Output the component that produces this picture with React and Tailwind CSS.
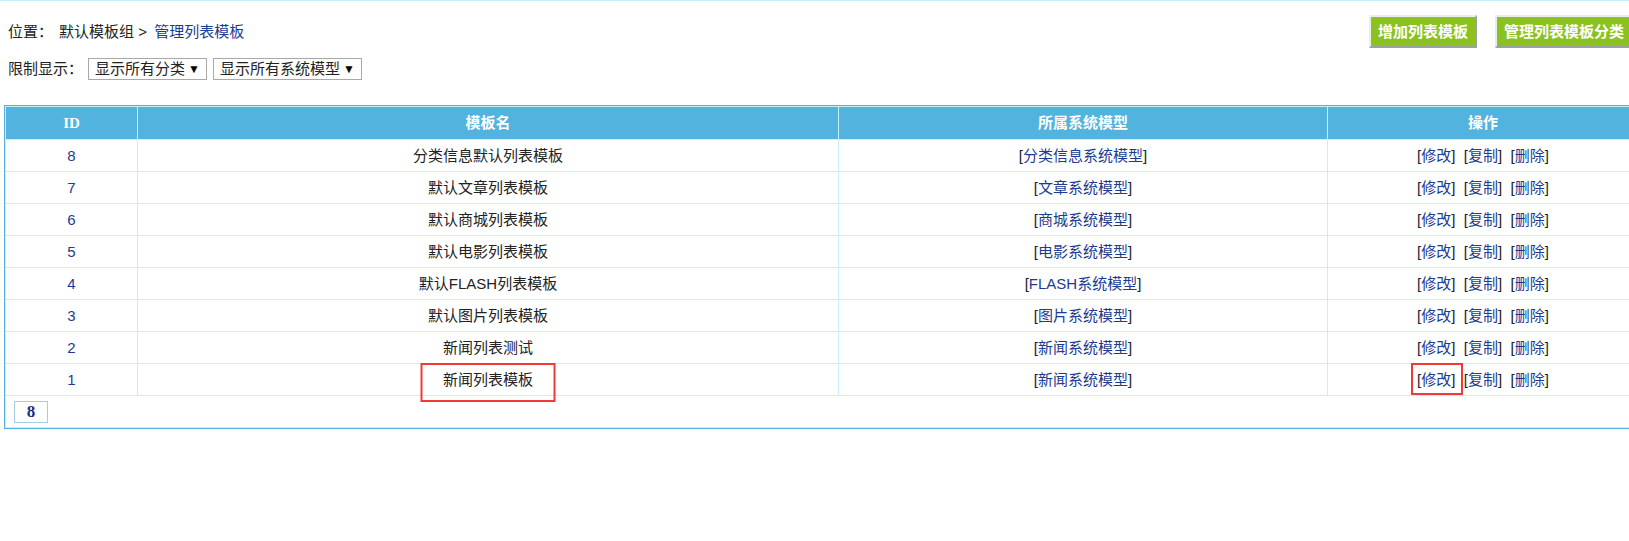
const rows = [
  { id: 8, name: '分类信息默认列表模板', model: '分类信息系统模型' },
  { id: 7, name: '默认文章列表模板', model: '文章系统模型' },
  { id: 6, name: '默认商城列表模板', model: '商城系统模型' },
  { id: 5, name: '默认电影列表模板', model: '电影系统模型' },
  { id: 4, name: '默认FLASH列表模板', model: 'FLASH系统模型' },
  { id: 3, name: '默认图片列表模板', model: '图片系统模型' },
  { id: 2, name: '新闻列表测试', model: '新闻系统模型' },
  { id: 1, name: '新闻列表模板', model: '新闻系统模型', marked: true },
];

const font = { fontFamily: '"Liberation Sans", "Noto Sans CJK SC", sans-serif' };

const Bracket = ({ children, boxed }) => (
  <span className="relative text-[#222]">
    [<span className="text-[#1b3c92]">{children}</span>]
    {boxed && (
      <span className="absolute -left-[6px] -right-[8px] top-1/2 -translate-y-1/2 h-[32px] border-2 border-[#f03a3a]" />
    )}
  </span>
);

const GreenButton = ({ children }) => (
  <button className="h-[33px] px-[7px] bg-[#8cc21f] text-white font-bold text-[15px] leading-[29px] border-2 border-t-[#ececec] border-l-[#ececec] border-b-[#a0a0a0] border-r-[#a0a0a0]">
    {children}
  </button>
);

const FakeSelect = ({ label, width }) => (
  <div className={`flex items-center justify-between h-[22px] px-[6px] border border-[#a9a9a9] bg-white text-[15px] text-[#222] ${width}`}>
    <span className="leading-[20px]">{label}</span>
    <span className="text-[12px] text-black">▼</span>
  </div>
);

export default function App() {
  return (
    <div className="w-[1629px] h-[541px] overflow-hidden bg-white" style={font}>
      <div className="w-[1640px] border-t border-[#c6eef9]">
        {/* Header */}
        <div className="flex justify-between pl-[8px] pr-[7px]">
          <div className="pt-[21px]">
            <div className="flex text-[15px] leading-[20px] text-[#222] whitespace-pre">
              <span>位置：</span>
              <span className="ml-[6px]">默认模板组 &gt; </span>
              <span className="ml-[3px] text-[#1b3c92]">管理列表模板</span>
            </div>
            <div className="flex items-center mt-[16px]">
              <span className="text-[15px] leading-[20px] text-[#222] w-[80px]">限制显示：</span>
              <FakeSelect label="显示所有分类" width="w-[119px]" />
              <div className="w-[6px]" />
              <FakeSelect label="显示所有系统模型" width="w-[149px]" />
            </div>
          </div>
          <div className="flex gap-[18px] pt-[14px]">
            <GreenButton>增加列表模板</GreenButton>
            <GreenButton>管理列表模板分类</GreenButton>
          </div>
        </div>

        {/* Table */}
        <div className="ml-[4px] mt-[25px] w-[1636px] border border-[#52b3de]">
          <table className="w-full border-separate border-spacing-[1px] bg-[#c9eefa] text-[15px]">
            <thead>
              <tr className="h-[32px] bg-[#52b3de] text-white font-bold">
                <th className="w-[131px]" style={{ fontFamily: '"Liberation Serif", serif' }}>ID</th>
                <th className="w-[700px]">模板名</th>
                <th className="w-[488px]">所属系统模型</th>
                <th>操作</th>
              </tr>
            </thead>
            <tbody>
              {rows.map((r) => (
                <tr key={r.id} className="h-[31px] bg-white text-center leading-[20px]">
                  <td className="text-[#1b3c92]">{r.id}</td>
                  <td className="relative text-[#222]">
                    {r.name}
                    {r.marked && (
                      <span className="absolute left-1/2 -translate-x-1/2 top-[-1px] w-[135px] h-[39px] border-2 border-[#f03a3a] z-10" />
                    )}
                  </td>
                  <td>
                    <Bracket>{r.model}</Bracket>
                  </td>
                  <td className="whitespace-pre">
                    <Bracket boxed={r.marked}>修改</Bracket>  <Bracket>复制</Bracket>  <Bracket>删除</Bracket>
                  </td>
                </tr>
              ))}
              <tr className="h-[31px] bg-white">
                <td colSpan={4} className="pl-[8px]">
                  <div
                    className="w-[34px] h-[22px] border border-[#a6cce6] flex items-center justify-center text-[17px] font-bold text-[#1a2f8a]"
                    style={{ fontFamily: '"Liberation Serif", serif' }}
                  >
                    8
                  </div>
                </td>
              </tr>
            </tbody>
          </table>
        </div>
      </div>
    </div>
  );
}
